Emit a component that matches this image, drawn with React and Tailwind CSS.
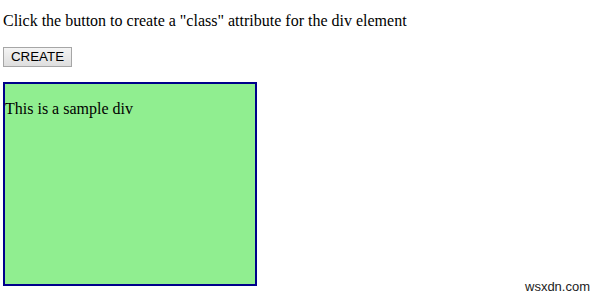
export default function App() {
  return (
    <div className="relative w-[599px] h-[298px] bg-white overflow-hidden font-['Liberation_Serif',serif] text-[16px] text-black">
      <div className="flex flex-col items-start pl-[3px] pt-[12px]">
        <p className="leading-[18px]">
          Click the button to create a "class" attribute for the div element
        </p>
        <button className="mt-[17px] h-[20px] w-[69px] flex items-center justify-center border border-[#a6a6a6] bg-gradient-to-b from-[#f4f4f4] to-[#dedede] font-['Liberation_Sans',sans-serif] text-[13.33px] leading-none text-black">
          CREATE
        </button>
        <div className="mt-[15px] w-[254px] h-[204px] border-2 border-[#00008b] bg-[#90ee90]">
          <p className="mt-[16px] leading-[18px]">This is a sample div</p>
        </div>
      </div>
      <span className="absolute left-[525px] top-[279px] font-['Liberation_Sans',sans-serif] text-[13px] leading-[16px] text-[#222]">
        wsxdn.com
      </span>
    </div>
  );
}
